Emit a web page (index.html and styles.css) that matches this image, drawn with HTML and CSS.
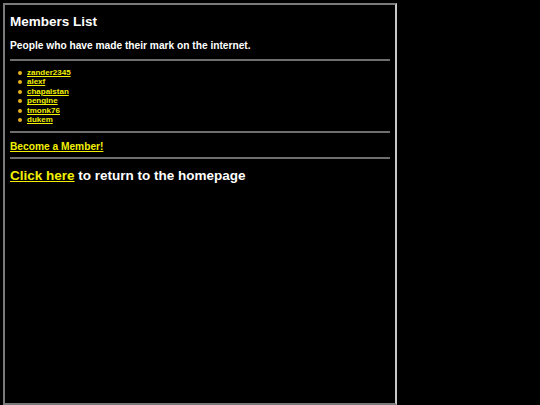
FILE: index.html
```html
<!DOCTYPE html>
<html>
<head>
<meta charset="utf-8">
<title>Members List</title>
<link rel="stylesheet" href="styles.css">
</head>
<body>
<div class="frame">
  <h1 class="title">Members List</h1>
  <p class="subtitle">People who have made their mark on the internet.</p>
  <div class="rule rule-top"></div>
  <ul class="members">
    <li><a href="#">zander2345</a></li>
    <li><a href="#">alexf</a></li>
    <li><a href="#">chapalstan</a></li>
    <li><a href="#">pengine</a></li>
    <li><a href="#">tmonk76</a></li>
    <li><a href="#">dukem</a></li>
  </ul>
  <div class="rule rule-mid"></div>
  <p class="become"><a href="#">Become a Member!</a></p>
  <div class="rule rule-low"></div>
  <p class="home"><a href="#">Click here</a> to return to the homepage</p>
</div>
</body>
</html>
```
FILE: styles.css
```css
html, body {
  margin: 0;
  padding: 0;
  background: #000;
}
body {
  font-family: "Liberation Sans", Arial, sans-serif;
  color: #fff;
  font-weight: bold;
  overflow: hidden;
}
.frame {
  margin: 3px 0 0 3px;
  width: 380px;
  height: 389px;
  padding: 9px 5px 0 5px;
  border: 2px solid;
  border-color: #7a7a7a #c8c8c8 #7a7a7a #7a7a7a;
}
a {
  color: #f2f000;
  text-decoration: underline;
}
.title {
  margin: 0;
  font-size: 13.5px;
  line-height: 16px;
}
.subtitle {
  margin: 10px 0 0 0;
  font-size: 10.2px;
  line-height: 12px;
}
.rule {
  height: 2px;
  background: #6e6e6e;
}
.rule-top { margin-top: 7px; }
.members {
  list-style: none;
  margin: 7px 0 0 0;
  padding: 0 0 0 17px;
  font-size: 8px;
  line-height: 9.4px;
}
.members li {
  position: relative;
}
.members li::before {
  content: "";
  position: absolute;
  left: -9px;
  top: 3px;
  width: 4px;
  height: 4px;
  border-radius: 50%;
  background: #e8b020;
}
.rule-mid { margin-top: 7px; }
.become {
  margin: 8px 0 0 0;
  font-size: 10.2px;
  line-height: 12px;
}
.rule-low { margin-top: 4px; }
.home {
  margin: 9px 0 0 0;
  font-size: 13.5px;
  line-height: 16px;
}
```
